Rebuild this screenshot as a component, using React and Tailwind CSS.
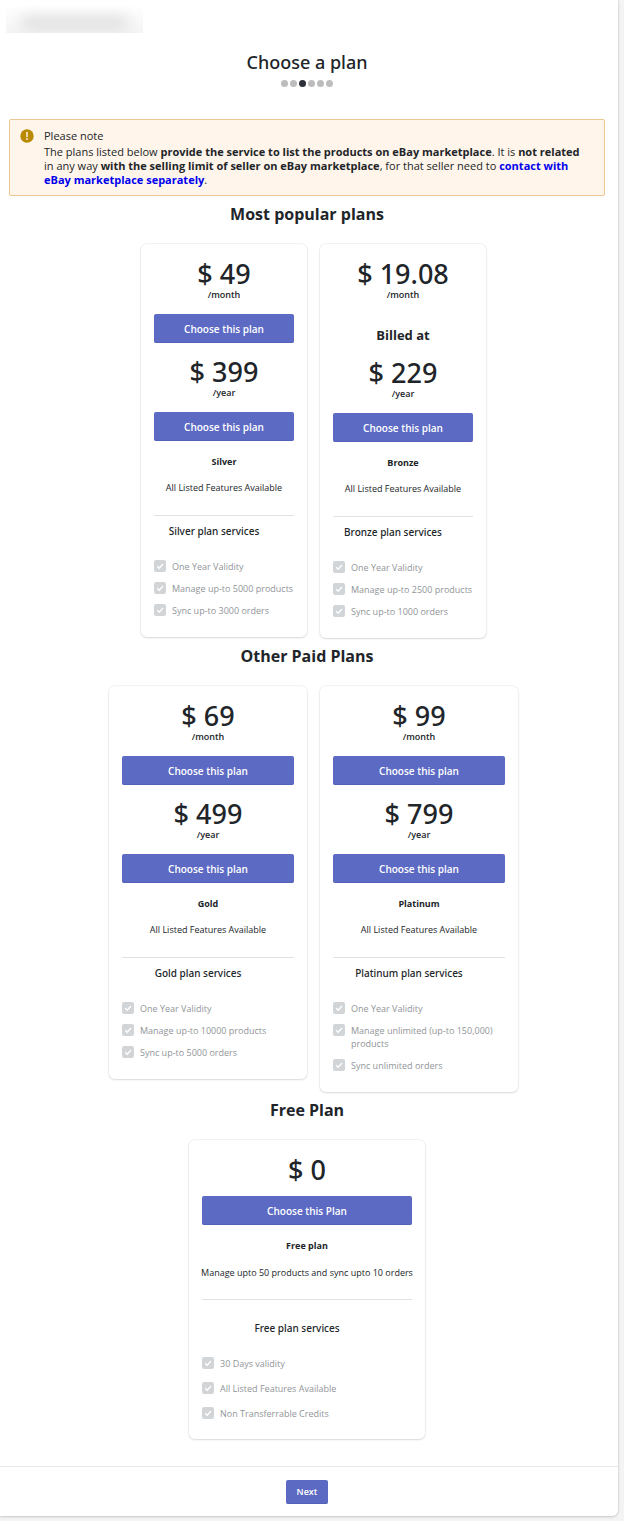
import React from 'react';
import { clsx } from 'clsx';

const popularPlans = [
  {
    name: 'Silver',
    monthly: '49',
    yearly: '399',
    description: 'All Listed Features Available',
    services: ['One Year Validity', 'Manage up-to 5000 products', 'Sync up-to 3000 orders'],
  },
  {
    name: 'Bronze',
    monthly: '19.08',
    yearly: '229',
    billedYearly: true,
    description: 'All Listed Features Available',
    services: ['One Year Validity', 'Manage up-to 2500 products', 'Sync up-to 1000 orders'],
  },
];

const otherPlans = [
  {
    name: 'Gold',
    monthly: '69',
    yearly: '499',
    description: 'All Listed Features Available',
    services: ['One Year Validity', 'Manage up-to 10000 products', 'Sync up-to 5000 orders'],
  },
  {
    name: 'Platinum',
    monthly: '99',
    yearly: '799',
    description: 'All Listed Features Available',
    services: ['One Year Validity', 'Manage unlimited (up-to 150,000) products', 'Sync unlimited orders'],
  },
];

const freeServices = ['30 Days validity', 'All Listed Features Available', 'Non Transferrable Credits'];

const TOTAL_STEPS = 6;
const CURRENT_STEP = 2;

function StepDots() {
  return (
    <div className="mt-[5px] flex justify-center gap-[2px]">
      {Array.from({ length: TOTAL_STEPS }, (_, i) => (
        <span
          key={i}
          className={clsx('size-[7px] rounded-full', i === CURRENT_STEP ? 'bg-[#2b2f38]' : 'bg-[#bdbdbd]')}
        />
      ))}
    </div>
  );
}

function Notice() {
  return (
    <section className="ml-[9px] mr-[13px] mt-8 flex gap-[10px] rounded-[2px] border border-[#ebc893] bg-[#fff5ea] pb-2 pl-[10px] pr-4 pt-[9px]">
      <svg viewBox="0 0 14 14" className="size-[14px] shrink-0" aria-hidden="true">
        <circle cx="7" cy="7" r="6.7" fill="#b98900" />
        <path d="M7 3.6v4" stroke="#fff5ea" strokeWidth="1.5" strokeLinecap="round" />
        <circle cx="7" cy="10" r="0.9" fill="#fff5ea" />
      </svg>
      <div className="text-[11px] leading-[14px]">
        <h2>Please note</h2>
        <p className="mt-[2px]">
          The plans listed below <b>provide the service to list the products on eBay marketplace</b>. It is{' '}
          <b>not related</b> in any way <b>with the selling limit of seller on eBay marketplace</b>, for that
          seller need to{' '}
          <a href="#contact" className="font-bold text-[#0000ee]">
            contact with eBay marketplace separately
          </a>
          .
        </p>
      </div>
    </section>
  );
}

function Price({ amount, period }) {
  return (
    <div className="text-center">
      <p className="font-['Noto_Sans',sans-serif] text-[27px] font-medium leading-8">$ {amount}</p>
      {period && <p className="text-[9px] font-semibold leading-[9px]">/{period}</p>}
    </div>
  );
}

function PlanButton({ children, className }) {
  return (
    <button
      type="button"
      className={clsx(
        'h-[29px] w-full rounded-[2px] border-b border-[#5361b8] bg-[#5c6ac4] pt-px text-[10px] font-semibold leading-4 text-white',
        className
      )}
    >
      {children}
    </button>
  );
}

function ServiceItem({ label }) {
  return (
    <li>
      <label className="flex items-start gap-[6px] text-[9px] leading-[13px] text-[#919599]">
        <span className="grid size-3 shrink-0">
          <input
            type="checkbox"
            checked
            disabled
            readOnly
            className="col-start-1 row-start-1 size-3 appearance-none rounded-[2px] bg-[#d2d5d8]"
          />
          <svg viewBox="0 0 12 12" className="col-start-1 row-start-1 size-3" fill="none" aria-hidden="true">
            <path d="M3.2 6.2l2 2 3.8-4.2" stroke="#fff" strokeWidth="1.3" />
          </svg>
        </span>
        <span>{label}</span>
      </label>
    </li>
  );
}

function ServicesTitle({ plan, className }) {
  return (
    <h4
      className={clsx(
        "pr-5 text-center font-['Noto_Sans',sans-serif] text-[10px] font-medium leading-4",
        className
      )}
    >
      {plan} plan services
    </h4>
  );
}

function Card({ className, children }) {
  return (
    <article
      className={clsx(
        'rounded-md bg-white px-[13px] shadow-[0_0_0_1px_rgba(63,63,68,0.05),0_1px_2px_0_rgba(63,63,68,0.15)]',
        className
      )}
    >
      {children}
    </article>
  );
}

function PlanCard({ plan, className }) {
  return (
    <Card className={clsx('pb-5 pt-[14px]', className)}>
      <Price amount={plan.monthly} period="month" />
      {plan.billedYearly ? (
        <p className="mt-[27px] text-center text-[13px] font-bold leading-[18px]">Billed at</p>
      ) : (
        <PlanButton className="mt-[15px]">Choose this plan</PlanButton>
      )}
      <div className="mt-[13px]">
        <Price amount={plan.yearly} period="year" />
      </div>
      <PlanButton className="mt-[15px]">Choose this plan</PlanButton>
      <h3 className="mt-[15px] text-center text-[9px] font-bold leading-3">{plan.name}</h3>
      <p className="mt-[14px] text-center text-[9px] leading-3">{plan.description}</p>
      <hr className="mt-[21px] border-[#dfe3e8]" />
      <ServicesTitle plan={plan.name} className="mt-[7px]" />
      <ul className="mt-[21px] flex flex-col gap-[9px]">
        {plan.services.map((service) => (
          <ServiceItem key={service} label={service} />
        ))}
      </ul>
    </Card>
  );
}

function SectionTitle({ children }) {
  return <h2 className="pb-[18px] pt-[6px] text-center text-base font-bold leading-6">{children}</h2>;
}

export default function App() {
  return (
    <div className="bg-[#f4f4f4] pb-[5px] pr-[6px] font-['Open_Sans','Noto_Sans',sans-serif] text-[#212529]">
      <main className="rounded-br-md bg-white shadow-[0_0_0_1px_rgba(63,63,68,0.05),0_1px_3px_0_rgba(63,63,68,0.2)]">
        <header className="pt-[5px]">
          <div className="ml-[6px] h-7 w-[137px] overflow-hidden bg-gradient-to-b from-white to-[#f4f4f4]">
            <div className="mx-4 mt-3 h-3 bg-[#dcdcdc] blur-[7px]" />
          </div>
          <div className="pr-1">
            <h1 className="mt-4 text-center font-['Noto_Sans',sans-serif] text-lg font-medium leading-[26px]">
              Choose a plan
            </h1>
            <StepDots />
          </div>
        </header>

        <Notice />

        <div className="pr-1">
          <SectionTitle>Most popular plans</SectionTitle>
          <div className="flex items-start justify-center gap-[13px] pl-[13px]">
            {popularPlans.map((plan) => (
              <PlanCard key={plan.name} plan={plan} className="w-[166px]" />
            ))}
          </div>

          <SectionTitle>Other Paid Plans</SectionTitle>
          <div className="flex items-start justify-center gap-[13px] pl-[13px]">
            {otherPlans.map((plan) => (
              <PlanCard key={plan.name} plan={plan} className="w-[198px]" />
            ))}
          </div>

          <SectionTitle>Free Plan</SectionTitle>
          <Card className="mx-auto w-[236px] pb-[19px] pt-[14px]">
            <Price amount="0" />
            <PlanButton className="mt-[10px]">Choose this Plan</PlanButton>
            <h3 className="mt-[15px] text-center text-[9px] font-bold leading-3">Free plan</h3>
            <p className="-mx-2 mt-[15px] text-center text-[9px] leading-3">
              Manage upto 50 products and sync upto 10 orders
            </p>
            <hr className="mt-5 border-[#dfe3e8]" />
            <ServicesTitle plan="Free" className="mt-5" />
            <ul className="mt-[21px] flex flex-col gap-3">
              {freeServices.map((service) => (
                <ServiceItem key={service} label={service} />
              ))}
            </ul>
          </Card>
        </div>

        <footer className="mt-[27px] flex justify-center border-t border-[#e6e8ea] pb-3 pr-1 pt-[13px]">
          <button
            type="button"
            className="h-6 w-[42px] rounded-[2px] border-b border-[#5361b8] bg-[#5c6ac4] pt-px text-[9px] font-semibold text-white"
          >
            Next
          </button>
        </footer>
      </main>
    </div>
  );
}
